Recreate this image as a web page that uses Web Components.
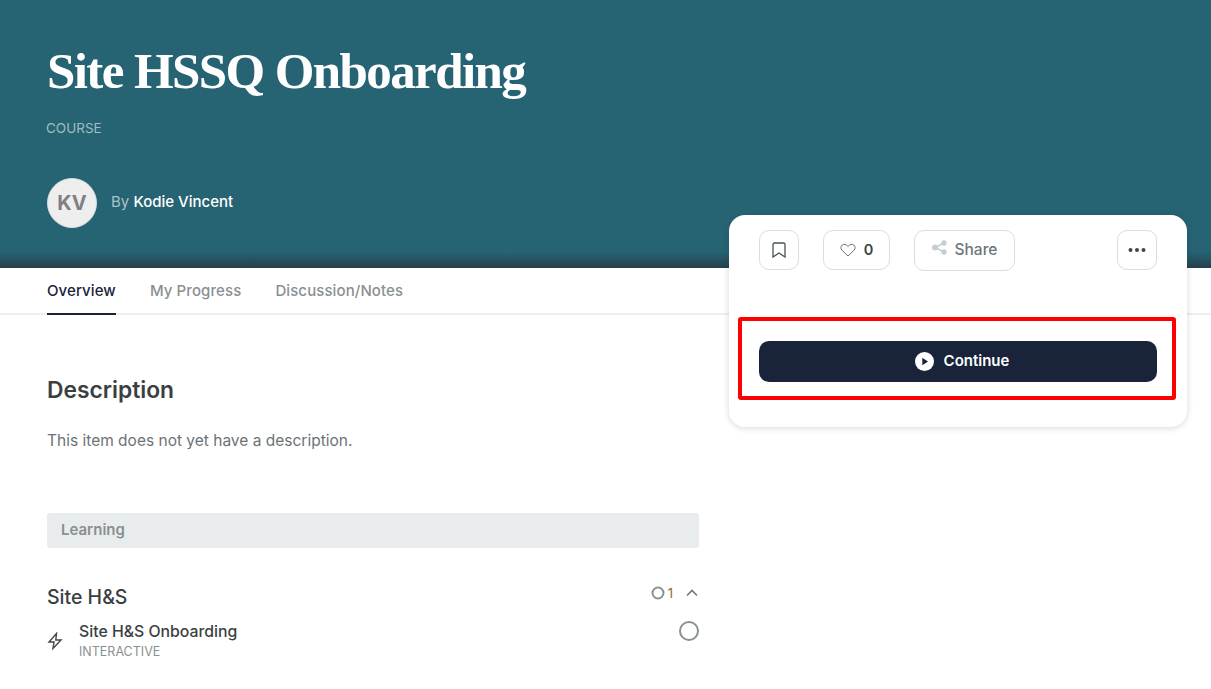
<!DOCTYPE html>
<html lang="en">
<head>
<meta charset="utf-8">
<title>Site HSSQ Onboarding</title>
<style>
  html, body { margin: 0; padding: 0; background: #fff; height: 689px; overflow: hidden; }
  body { font-family: "Inter", "Liberation Sans", sans-serif; position: relative; }
</style>
</head>
<body>
<course-page></course-page>

<script>
const SANS = `"Inter", "Liberation Sans", sans-serif`;

class CourseHero extends HTMLElement {
  constructor() {
    super();
    this.attachShadow({ mode: 'open' });
    this.shadowRoot.innerHTML = `
      <style>
        :host {
          display: block;
          height: 268px;
          box-sizing: border-box;
          padding: 36px 47px 0;
          background: linear-gradient(to bottom, #266373 0, #266373 252px, #25525f 260px, #263f48 268px);
          color: #fff;
        }
        h1 {
          margin: 0;
          font: 700 51px/70px "Liberation Serif", serif;
          letter-spacing: -1.6px;
          height: 70px;
        }
        .type {
          margin-top: 14px;
          margin-left: -1px;
          font: 400 13.5px/17px ${SANS};
          color: #9fbcc3;
        }
        .author {
          display: flex;
          align-items: center;
          gap: 14px;
          margin-top: 41px;
          font: 400 15px/20px ${SANS};
        }
        .avatar {
          width: 50px;
          height: 50px;
          border-radius: 50%;
          background: #eeeeee;
          border: 1px solid #d5dcdd;
          box-sizing: border-box;
          display: flex;
          align-items: center;
          justify-content: center;
          color: #808080;
          font: 700 20px/1 ${SANS};
        }
        .by { color: #a9c2c8; }
        .name { color: #fff; font-weight: 500; }
        .text { margin-top: -3px; }
      </style>
      <h1><slot></slot></h1>
      <div class="type">COURSE</div>
      <div class="author">
        <div class="avatar">KV</div>
        <div class="text"><span class="by">By</span> <span class="name">Kodie Vincent</span></div>
      </div>
    `;
  }
}
customElements.define('course-hero', CourseHero);

class CourseTabs extends HTMLElement {
  constructor() {
    super();
    this.attachShadow({ mode: 'open' });
    this.shadowRoot.innerHTML = `
      <style>
        :host {
          display: flex;
          gap: 34px;
          height: 47px;
          box-sizing: border-box;
          padding: 0 47px;
          border-bottom: 2px solid #eceeef;
          font: 500 15px/45px ${SANS};
          letter-spacing: 0.1px;
          color: #8a8f92;
        }
        div { height: 47px; box-sizing: border-box; }
        .active { color: #19233a; border-bottom: 2px solid #19233a; }
      </style>
      <div class="active">Overview</div>
      <div>My Progress</div>
      <div>Discussion/Notes</div>
    `;
  }
}
customElements.define('course-tabs', CourseTabs);

class CourseSection extends HTMLElement {
  constructor() {
    super();
    this.attachShadow({ mode: 'open' });
    this.shadowRoot.innerHTML = `
      <style>
        :host { display: block; }
        .head {
          display: flex;
          align-items: center;
          justify-content: space-between;
          height: 30px;
        }
        .title { font: 500 19.5px/30px ${SANS}; color: #3a3f42; }
        .meta { display: flex; align-items: center; gap: 3px; font: 400 13px/1 ${SANS}; color: #8a6a3c; margin-top: -8px; }
        .meta svg { display: block; }
        .chev { margin-left: 9px; }
        .item {
          display: flex;
          align-items: center;
          margin-top: 10px;
        }
        .bolt { width: 32px; flex: none; }
        .body { flex: 1; }
        .name { font: 500 15.8px/20px ${SANS}; color: #3a3f42; }
        .kind { font: 400 12.5px/16px ${SANS}; color: #8a8f92; margin-top: 2px; }
        .check { margin-top: -20px; }
      </style>
      <div class="head">
        <div class="title">Site H&amp;S</div>
        <div class="meta">
          <svg width="14" height="14" viewBox="0 0 14 14"><circle cx="7" cy="7" r="5.500" fill="none" stroke="#8a9194" stroke-width="2"/></svg>
          <span>1</span>
          <svg class="chev" width="14" height="14" viewBox="0 0 14 14"><path d="M2 9.500 7 4.500l5 5" fill="none" stroke="#6f787c" stroke-width="1.600"/></svg>
        </div>
      </div>
      <div class="item">
        <div class="bolt">
          <svg width="16" height="18" viewBox="0 0 16 18" style="display:block"><path d="M9.500 1.500 2 10h5l-1 6.500L14 8H8.800z" fill="none" stroke="#3f474b" stroke-width="1.400" stroke-linejoin="miter"/></svg>
        </div>
        <div class="body">
          <div class="name">Site H&amp;S Onboarding</div>
          <div class="kind">INTERACTIVE</div>
        </div>
        <svg class="check" width="20" height="20" viewBox="0 0 20 20"><circle cx="10" cy="10" r="9" fill="none" stroke="#8a9194" stroke-width="2"/></svg>
      </div>
    `;
  }
}
customElements.define('course-section', CourseSection);

class ActionCard extends HTMLElement {
  constructor() {
    super();
    this.attachShadow({ mode: 'open' });
    this.shadowRoot.innerHTML = `
      <style>
        :host {
          /* floats over the hero and the tabs */
          position: absolute;
          left: 729px;
          top: 215px;
          width: 458px;
          height: 212px;
          box-sizing: border-box;
          padding: 15px 30px 0;
          background: #fff;
          border-radius: 16px;
          box-shadow: 0 1px 6px rgba(40, 60, 70, 0.2);
        }
        .actions { display: flex; align-items: flex-start; }
        .btn {
          height: 40px;
          box-sizing: border-box;
          border: 1px solid #d8dddf;
          border-radius: 10px;
          background: #fff;
          display: flex;
          align-items: center;
          justify-content: center;
          font: 600 14.500px/1 ${SANS};
          color: #3a4448;
        }
        .save { width: 40px; }
        .like { width: 67px; margin-left: 24px; gap: 8px; }
        .share { width: 101px; height: 41px; margin-left: 24px; gap: 8px; color: #6c7579; font-size: 15.500px; font-weight: 500; }
        .share span { margin-top: -2px; }
        .more { width: 40px; margin-left: auto; }
        svg { display: block; }
        hr {
          margin: 46px 0 0;
          border: 0;
          border-top: 1px solid #e6e9ea;
        }
        .continue {
          margin-top: 23px;
          height: 41px;
          box-sizing: border-box;
          padding-left: 8px;
          border-radius: 10px;
          background: #19233a;
          color: #fff;
          display: flex;
          align-items: center;
          justify-content: center;
          gap: 10px;
          font: 600 15px/1 ${SANS};
        }
        .continue span { margin-top: -2px; }
        .mark {
          position: absolute;
          left: 9px;
          top: 102px;
          width: 438px;
          height: 83px;
          box-sizing: border-box;
          border: 4px solid #ff0000;
          border-radius: 3px;
        }
      </style>
      <div class="actions">
        <div class="btn save">
          <svg width="14" height="16" viewBox="0 0 14 16"><path d="M2.500 1h9A1.500 1.500 0 0 1 13 2.500V15l-6-4-6 4V2.500A1.500 1.500 0 0 1 2.500 1z" fill="none" stroke="#4a5256" stroke-width="1.300"/></svg>
        </div>
        <div class="btn like">
          <svg width="16" height="14" viewBox="0 0 16 14"><path d="M8 13 2 7.200C.4 5.600.6 3.200 2.200 2 3.800.8 6 1.200 8 3.400c2-2.200 4.200-2.600 5.800-1.400 1.600 1.200 1.800 3.600.2 5.200z" fill="none" stroke="#6a7276" stroke-width="1"/></svg>
          <span>0</span>
        </div>
        <div class="btn share">
          <svg width="15" height="15" viewBox="0 0 15 15" style="margin-top:-6px"><g fill="#c3cfd4"><circle cx="3" cy="7.500" r="3"/><circle cx="12" cy="3" r="2.700"/><circle cx="12" cy="12" r="2.700"/></g><path d="M3 7.500 12 3M3 7.500 12 12" stroke="#c3cfd4" stroke-width="1.500"/></svg>
          <span>Share</span>
        </div>
        <div class="btn more">
          <svg width="18" height="4" viewBox="0 0 18 4"><g fill="#3f474b"><circle cx="2.500" cy="2" r="2"/><circle cx="9" cy="2" r="2"/><circle cx="15.500" cy="2" r="2"/></g></svg>
        </div>
      </div>
      <hr>
      <div class="continue">
        <svg width="19" height="19" viewBox="0 0 19 19"><circle cx="9.500" cy="9.500" r="9.500" fill="#fff"/><path d="M7.300 5.800v7.400l5.700-3.700z" fill="#19233a"/></svg>
        <span>Continue</span>
      </div>
      <div class="mark"></div>
    `;
  }
}
customElements.define('action-card', ActionCard);

class CoursePage extends HTMLElement {
  constructor() {
    super();
    this.attachShadow({ mode: 'open' });
    this.shadowRoot.innerHTML = `
      <style>
        :host { display: block; position: relative; height: 689px; overflow: hidden; }
        main { width: 652px; padding: 60px 0 0 47px; }
        h2 { margin: 0; font: 600 22.800px/30px ${SANS}; color: #3a3f42; }
        p { margin: 26px 0 0; font: 400 15.500px/20px ${SANS}; color: #6c7376; }
        .group {
          margin-top: 62px;
          height: 35px;
          box-sizing: border-box;
          padding-left: 14px;
          border-radius: 3px;
          background: #e9eced;
          font: 600 15px/34px ${SANS};
          color: #8a8f92;
        }
        course-section { margin-top: 34px; }
      </style>
      <course-hero>Site HSSQ Onboarding</course-hero>
      <course-tabs></course-tabs>
      <main>
        <h2>Description</h2>
        <p>This item does not yet have a description.</p>
        <div class="group">Learning</div>
        <course-section></course-section>
      </main>
      <action-card></action-card>
    `;
  }
}
customElements.define('course-page', CoursePage);
</script>
</body>
</html>
